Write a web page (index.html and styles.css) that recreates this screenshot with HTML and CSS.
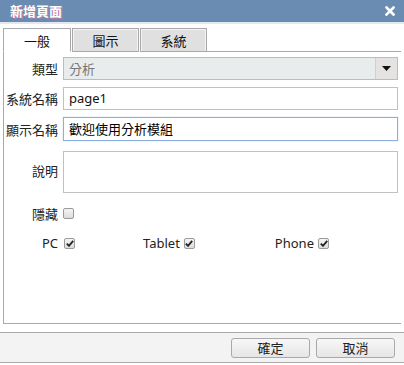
FILE: index.html
```html
<!DOCTYPE html>
<html lang="zh-Hant">
<head>
<meta charset="utf-8">
<link rel="stylesheet" href="styles.css">
</head>
<body>
<div class="dialog">
  <div class="titlebar">
    <span class="title">新增頁面</span>
    <span class="close"><svg width="10" height="10" viewBox="0 0 10 10"><path d="M1.5 1.5L8.5 8.5M8.5 1.5L1.5 8.5" stroke="#fff" stroke-width="2.6" stroke-linecap="square"/></svg></span>
  </div>
  <div class="content">
    <div class="tabs">
      <div class="tab active">一般</div>
      <div class="tab">圖示</div>
      <div class="tab">系統</div>
      <div class="tab-fill"></div>
    </div>
    <div class="panel">
      <div class="form">
        <label class="lbl">類型</label>
        <div class="select">
          <span class="select-text">分析</span>
          <span class="select-btn"><svg width="9" height="5" viewBox="0 0 9 5"><path d="M0 0H9L4.5 5Z" fill="#111"/></svg></span>
        </div>
        <label class="lbl">系統名稱</label>
        <div class="input">page1</div>
        <label class="lbl">顯示名稱</label>
        <div class="input focus">歡迎使用分析模組</div>
        <label class="lbl lbl-mid">說明</label>
        <div class="textarea"></div>
        <label class="lbl lbl-hide">隱藏</label>
        <div class="chkcell"><span class="chk"></span></div>
      </div>
      <div class="devices">
        <div class="dev dev-pc"><span class="dlbl">PC</span><span class="chk on"><svg width="8" height="7" viewBox="0 0 8 7"><path d="M0.8 3.6L3 5.8L7.2 0.8" fill="none" stroke="#222" stroke-width="1.8"/></svg></span></div>
        <div class="dev dev-tab"><span class="dlbl">Tablet</span><span class="chk on"><svg width="8" height="7" viewBox="0 0 8 7"><path d="M0.8 3.6L3 5.8L7.2 0.8" fill="none" stroke="#222" stroke-width="1.8"/></svg></span></div>
        <div class="dev dev-ph"><span class="dlbl">Phone</span><span class="chk on"><svg width="8" height="7" viewBox="0 0 8 7"><path d="M0.8 3.6L3 5.8L7.2 0.8" fill="none" stroke="#222" stroke-width="1.8"/></svg></span></div>
      </div>
    </div>
  </div>
  <div class="footer">
    <button class="btn">確定</button>
    <button class="btn">取消</button>
  </div>
</div>
</body>
</html>
```
FILE: styles.css
```css
html, body {
  margin: 0;
  padding: 0;
  background: #ffffff;
}
body {
  font-family: "Noto Sans", "Noto Sans CJK TC", sans-serif;
  font-size: 13px;
  color: #222;
}
.dialog {
  width: 404px;
  height: 365px;
  display: flex;
  flex-direction: column;
}
.titlebar {
  height: 22px;
  background: #6a8cb2;
  border-bottom: 2px solid #e4e8ee;
  display: flex;
  align-items: center;
  justify-content: space-between;
  padding: 0 9px 0 10px;
}
.title {
  color: #fff;
  font-weight: bold;
  font-size: 13px;
  font-family: "Noto Sans CJK TC", sans-serif;
  text-shadow: 1px 1px 0 #c07ba0;
  line-height: 22px;
}
.close {
  display: flex;
  align-items: center;
  height: 22px;
  margin-top: -1px;
}
.content {
  padding: 4px 3px 0 3px;
}
.tabs {
  display: flex;
  height: 24px;
}
.tab {
  width: 65px;
  height: 22px;
  border: 1px solid #a8a8a8;
  background: #e0e0e0;
  box-shadow: inset 1px 1px 0 #f4f4f4, inset -1px 0 0 #f4f4f4;
  text-align: center;
  line-height: 23px;
  font-family: "Noto Sans CJK TC", sans-serif;
  font-size: 13px;
  color: #111;
}
.tab + .tab {
  margin-left: 1px;
}
.tab.active {
  background: #fff;
  box-shadow: none;
  border-bottom: 1px solid #fff;
  width: 66px;
}
.tab-fill {
  flex: 1;
  border-bottom: 1px solid #a8a8a8;
}
.panel {
  height: 272px;
  border: 1px solid #a8a8a8;
  border-top: none;
  border-right: none;
  box-sizing: border-box;
  padding-top: 5px;
}
.form {
  display: grid;
  grid-template-columns: 54px 335px;
  column-gap: 5px;
  row-gap: 7px;
  align-items: center;
}
.lbl {
  text-align: right;
  font-family: "Noto Sans CJK TC", sans-serif;
  font-size: 13px;
  color: #222;
}
.select {
  height: 21px;
  border: 1px solid #bcbcbc;
  background: #e9ecec;
  display: flex;
  align-items: center;
  justify-content: space-between;
}
.select-text {
  padding-left: 5px;
  color: #777;
  font-family: "Noto Sans CJK TC", sans-serif;
}
.select-btn {
  width: 21px;
  height: 21px;
  background: #e4e3e1;
  border-left: 1px solid #cfcfcf;
  display: flex;
  align-items: center;
  justify-content: center;
}
.input {
  height: 21px;
  border: 1px solid #c0c0c0;
  background: #fff;
  padding-left: 5px;
  line-height: 21px;
  color: #111;
  font-family: "Noto Sans", "Noto Sans CJK TC", sans-serif;
}
.input.focus {
  border-color: #8eaee0;
  box-shadow: 0 0 1px #a8c4ee;
  height: 22px;
  line-height: 22px;
  font-family: "Noto Sans CJK TC", sans-serif;
  color: #000;
}
.textarea {
  height: 40px;
  border: 1px solid #c0c0c0;
  background: #fff;
  margin-top: 3px;
}
.chkcell {
  height: 16px;
  display: flex;
  align-items: center;
  margin-top: 4px;
}
.lbl-hide {
  margin-top: 4px;
}
.chk {
  width: 9px;
  height: 9px;
  border: 1px solid #9a9a9a;
  border-radius: 2px;
  background: linear-gradient(#f4f4f4, #dcdcdc);
  display: inline-flex;
  align-items: center;
  justify-content: center;
}
.devices {
  display: flex;
  align-items: center;
  margin-top: 12px;
  height: 16px;
}
.dev {
  display: flex;
  align-items: center;
  gap: 4px;
}
.dlbl {
  font-family: "Noto Sans", sans-serif;
  font-size: 13px;
  color: #222;
}
.dev-pc {
  width: 71px;
  justify-content: flex-end;
}
.dev-pc .dlbl {
  margin-right: 2px;
}
.dev-tab {
  margin-left: 68px;
}
.dev-ph {
  margin-left: 80px;
}
.footer {
  margin-top: 8px;
  height: 29px;
  border-top: 1px solid #a8a8a8;
  border-bottom: 1px solid #a8a8a8;
  background: #f3f3f3;
  display: flex;
  align-items: center;
  justify-content: flex-end;
  gap: 6px;
  padding-right: 9px;
}
.btn {
  width: 79px;
  height: 20px;
  border: 1px solid #a9a9a9;
  border-radius: 3px;
  background: linear-gradient(#f7f7f7, #e6e6e6);
  font-family: "Noto Sans CJK TC", sans-serif;
  font-size: 13px;
  color: #222;
  padding: 0;
  line-height: 18px;
}
```
